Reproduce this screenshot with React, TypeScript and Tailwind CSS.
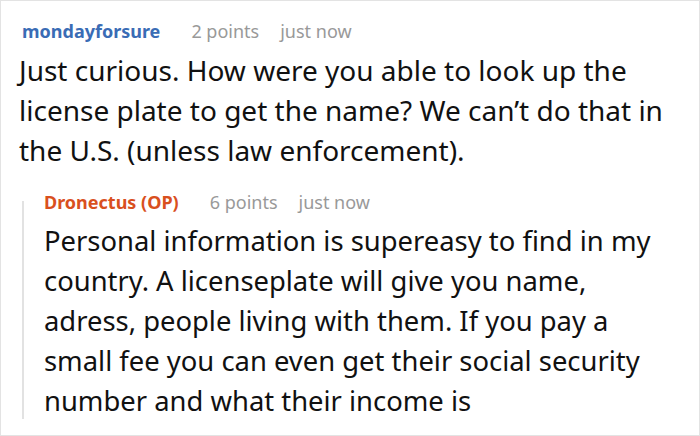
import React from "react";

export default function App() {
  return (
    <div className="w-[700px] h-[436px] bg-white border border-[#e3e3e3] overflow-hidden" style={{ fontFamily: '"Noto Sans", sans-serif' }}>
      <div className="pl-[21px] pt-[17px]">
        <div className="flex items-baseline text-[18px] leading-[26px]">
          <span className="font-bold text-[#3a6cb5]">mondayforsure</span>
          <span className="ml-[31px] text-[#999999]">2 points</span>
          <span className="ml-[21px] text-[#999999]">just now</span>
        </div>
        <p className="text-[28px] leading-[40px] text-[#111111] mt-[6px] -ml-[3px] whitespace-nowrap">
          Just curious. How were you able to look up the
          <br />
          license plate to get the name? We can’t do that in
          <br />
          the U.S. (unless law enforcement).
        </p>
        <div className="mt-[19px] flex">
          <div className="w-[2px] bg-[#e2e2e2] mt-[12px] h-[218px]" />
          <div className="pl-[20px]">
            <div className="flex items-baseline text-[18px] leading-[26px]">
              <span className="font-bold text-[#d9501e]">Dronectus (OP)</span>
              <span className="ml-[31px] text-[#999999]">6 points</span>
              <span className="ml-[21px] text-[#999999]">just now</span>
            </div>
            <p className="text-[27.4px] leading-[40px] text-[#111111] mt-[6px] whitespace-nowrap">
              Personal information is supereasy to find in my
              <br />
              country. A licenseplate will give you name,
              <br />
              adress, people living with them. If you pay a
              <br />
              small fee you can even get their social security
              <br />
              number and what their income is
            </p>
          </div>
        </div>
      </div>
    </div>
  );
}
